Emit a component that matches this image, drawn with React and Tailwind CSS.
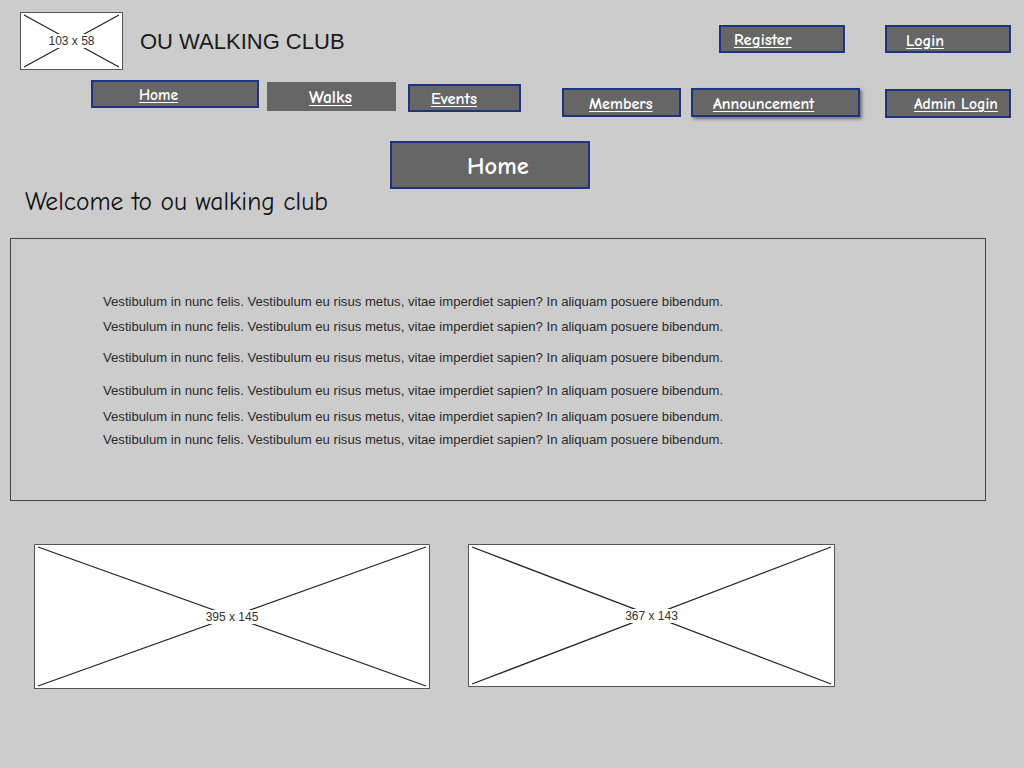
import React from "react";

const hand = { fontFamily: '"Comic Sans MS", "Comic Neue", Lato, "DejaVu Sans", sans-serif' };
const arial = { fontFamily: '"Liberation Sans", Arial, sans-serif' };

function Placeholder({ w, h, label }) {
  return (
    <div
      className="relative bg-white border border-[#555] shrink-0"
      style={{ width: w, height: h }}
    >
      <svg className="absolute inset-0" width={w - 2} height={h - 2} viewBox={`0 0 ${w - 2} ${h - 2}`}>
        <line x1="3" y1="2" x2={w - 5} y2={h - 4} stroke="#222" strokeWidth="1.2" />
        <line x1={w - 5} y1="2" x2="3" y2={h - 4} stroke="#222" strokeWidth="1.2" />
      </svg>
      <div className="absolute inset-0 flex items-center justify-center">
        <span className="bg-white px-[3px] leading-[14px] text-[#333] text-[12px]" style={arial}>
          {label}
        </span>
      </div>
    </div>
  );
}

function Btn({ w, h, pl, fs, children, border = true, shadow = false, mt = "" }) {
  return (
    <div
      className={`flex items-center bg-[#666] shrink-0 pt-[3px] ${border ? "border-2 border-[#1e3480]" : ""} ${shadow ? "shadow-[2px_2px_3px_rgba(0,0,0,0.45)]" : ""} ${mt}`}
      style={{ width: w, height: h, paddingLeft: pl }}
    >
      <span className={`text-white font-bold underline underline-offset-2 whitespace-nowrap ${fs} leading-none`} style={hand}>
        {children}
      </span>
    </div>
  );
}

const lorem =
  "Vestibulum in nunc felis. Vestibulum eu risus metus, vitae imperdiet sapien? In aliquam posuere bibendum.";

export default function App() {
  return (
    <div className="w-[1024px] h-[768px] bg-[#cccccc] overflow-hidden">
      {/* Row 1 */}
      <div className="flex items-start pt-[12px] pl-[20px]">
        <Placeholder w={103} h={58} label="103 x 58" />
        <div className="ml-[17px] mt-[17px] text-[22px] leading-[26px] text-[#1a1a1a]" style={arial}>
          OU WALKING CLUB
        </div>
        <div className="ml-auto mt-[13px] flex gap-[40px] pr-[13px]">
          <Btn w={126} h={28} pl={13} fs="text-[16.5px]">Register</Btn>
          <Btn w={126} h={28} pl={19} fs="text-[16px]">Login</Btn>
        </div>
      </div>

      {/* Row 2 nav */}
      <div className="flex items-start mt-[10px] pl-[91px]">
        <Btn w={168} h={28} pl={46} fs="text-[15.5px]">Home</Btn>
        <Btn w={129} h={29} pl={42} fs="text-[17.5px]" border={false} mt="mt-[2px] ml-[8px]">Walks</Btn>
        <Btn w={113} h={28} pl={21} fs="text-[16.5px]" mt="mt-[4px] ml-[12px]">Events</Btn>
        <Btn w={119} h={29} pl={25} fs="text-[16.2px]" mt="mt-[8px] ml-[41px]">Members</Btn>
        <Btn w={169} h={29} pl={20} fs="text-[16px]" shadow mt="mt-[8px] ml-[10px]">Announcement</Btn>
        <Btn w={126} h={29} pl={27} fs="text-[15.6px]" mt="mt-[9px] ml-[25px]">Admin Login</Btn>
      </div>

      {/* Title box */}
      <div className="mt-[23px] ml-[390px] w-[200px] h-[48px] bg-[#666] border-2 border-[#1e3480] flex items-center pl-[75px] pt-[2px]">
        <span className="text-white font-bold text-[24.5px] leading-none" style={hand}>Home</span>
      </div>

      <div className="mt-[-3px] ml-[25px] text-[25.5px] leading-[32px] text-[#111]" style={hand}>
        Welcome to ou walking club
      </div>

      {/* Content box */}
      <div className="mt-[20px] ml-[10px] w-[976px] h-[263px] border border-[#444] pt-[55px] pl-[92px]">
        {["", "mt-[9px]", "mt-[15px]", "mt-[17px]", "mt-[10px]", "mt-[7px]"].map((m, i) => (
          <div key={i} className={`text-[13.13px] leading-[16px] text-[#2a2a2a] whitespace-nowrap ${m}`} style={arial}>
            {lorem}
          </div>
        ))}
      </div>

      {/* Images */}
      <div className="flex items-start mt-[43px] ml-[34px] gap-[38px]">
        <Placeholder w={396} h={145} label="395 x 145" />
        <Placeholder w={367} h={143} label="367 x 143" />
      </div>
    </div>
  );
}
